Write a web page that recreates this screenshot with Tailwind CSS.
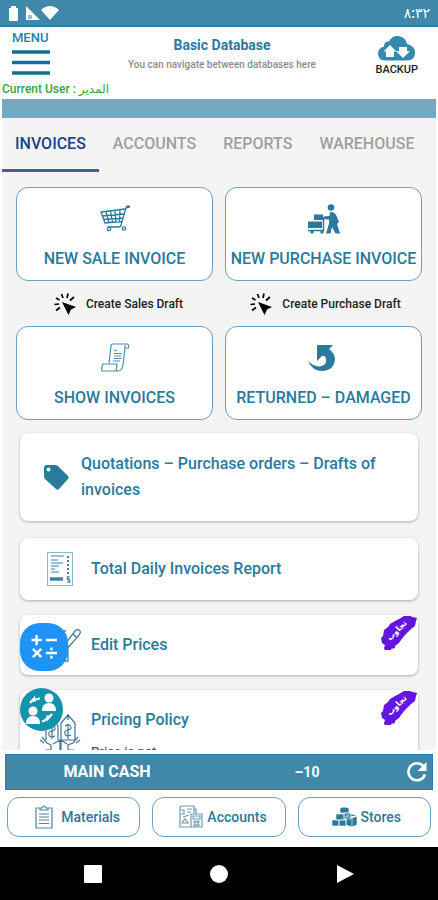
<!DOCTYPE html>
<html lang="en">
<head>
<meta charset="utf-8">
<meta name="viewport" content="width=device-width, initial-scale=1">
<title>Basic Database</title>
<script src="https://cdn.jsdelivr.net/npm/@tailwindcss/browser@4"></script>
</head>
<body class="flex h-screen flex-col overflow-hidden bg-white font-['Roboto','Noto_Sans','DejaVu_Sans',sans-serif] font-medium text-[#2a7a9c]">

<!-- Status bar -->
<div class="flex h-[27px] shrink-0 items-center justify-between border-b-2 border-[#2a7fa2] bg-[#3f88aa] px-2 text-white">
  <svg class="h-4 w-[52px]" viewBox="0 0 52 16" fill="currentColor" aria-hidden="true">
    <path d="M1 4q0-1 1-1h1V1h5v2h1q1 0 1 1v11q0 1-1 1H2q-1 0-1-1z"/>
    <path d="M18 1l14 14H18z"/><path d="M20 10h4v4h-4z" fill="#9dbfd0"/>
    <path d="M33 5q9-8 18 0l-9 10z"/>
  </svg>
  <time class="text-sm">٨:٣٢</time>
</div>

<!-- Header -->
<header class="shrink-0">
  <div class="flex h-14 justify-between pr-5 pl-3">
    <button class="flex w-16 flex-col items-start text-[13px] leading-4 text-[#2a7fa2]" type="button">
      <span class="pt-[3px]">MENU</span>
      <svg class="mt-1 h-[25px] w-[38px]" viewBox="0 0 38 25" aria-hidden="true"><path d="M0 2h38M0 12.500h38M0 23h38" stroke="#126f97" stroke-width="3.500"/></svg>
    </button>
    <div class="pt-2 text-center">
      <h1 class="text-sm leading-5 font-bold">Basic Database</h1>
      <p class="text-[10px] leading-5 text-[#8c8c8c]">You can navigate between databases here</p>
    </div>
    <button class="flex w-[50px] flex-col items-end pt-2 text-[11px] leading-[18px] text-[#222]" type="button">
      <svg class="mr-0.5 h-[26px] w-[39px]" viewBox="0 0 39 26" aria-hidden="true">
        <path d="M8 25.500Q1 25 1 18.500 1 13 7 11.500 7 6 12 6.500 15 .500 21 1q7 .500 9 8 8 1.500 8 9 0 6.500-7 7.500z" fill="#3489ad"/>
        <path d="M13 10l6.500 6.500H17V22H9v-5.500H6.500zM22 12h8v4h3l-7 7-7-7h3z" fill="#fff"/>
      </svg>
      <span>BACKUP</span>
    </button>
  </div>
  <p class="h-4 pl-[2px] text-xs leading-[13px] text-[#35a53a]">Current User : <bdi>المدير</bdi></p>
  <div class="mx-[2px] h-[19px] bg-[#74a9c4]"></div>
</header>

<!-- Scrolling content -->
<main class="mx-[2px] min-h-0 grow overflow-hidden bg-[#f4f4f4]">
  <nav class="flex h-[54px] gap-px text-base text-[#a0a0a0]">
    <a href="#" class="border-b-[3px] border-[#3d6296] px-[13px] pt-[14px] text-[#20408a]">INVOICES</a>
    <a href="#" class="px-[13px] pt-[14px]">ACCOUNTS</a>
    <a href="#" class="px-[13px] pt-[14px]">REPORTS</a>
    <a href="#" class="px-[13px] pt-[14px]">WAREHOUSE</a>
  </nav>

  <div class="grid grid-cols-2 gap-x-3 px-[14px] pt-[15px]">
    <button class="flex h-[94px] flex-col items-center rounded-xl border border-[#6b9fba] bg-white pt-4 whitespace-nowrap" type="button">
      <svg class="h-[30px] w-[30px]" viewBox="0 0 30 30" fill="none" stroke="#2a7a9c" stroke-width="1.300" stroke-linecap="round" aria-hidden="true">
        <path d="M29 3l-3 1-5 17q0 2-3 2H8M1 8l24-3M1 8l4 11 17-1.500M2.500 12l21-2M4 15.500l19-1.500M6 8l3 10.500M10.500 7.500l2 10.500M15 7l1 11M20 6.500l-.500 11"/>
        <circle cx="9" cy="25" r="1.700"/><circle cx="24" cy="24.500" r="1.700"/><path d="M27 3l2-.500" stroke-width="2.500"/>
      </svg>
      <span class="mt-[13px] text-base leading-6">NEW SALE INVOICE</span>
    </button>
    <button class="flex h-[94px] flex-col items-center rounded-xl border border-[#6b9fba] bg-white pt-4 whitespace-nowrap" type="button">
      <svg class="h-[30px] w-[34px]" viewBox="0 0 34 30" fill="#2a7a9c" aria-hidden="true">
        <circle cx="24" cy="3.500" r="3.300"/>
        <path d="M7 10.500h9V16H7zM1 17.500h14V24H1z"/>
        <path d="M23 8q5-.500 7 5l2 5-2 2 3 9.500h-4.500L25 23l-1.500 6.500H19l3-10v-4l-5.500-.500v-2.500l6-.500z"/>
        <path d="M1 26.500h15.500V14H21" fill="none" stroke="#2a7a9c" stroke-width="1.500"/>
        <circle cx="5" cy="28" r="1.700"/><circle cx="15" cy="28" r="1.700"/>
      </svg>
      <span class="mt-[13px] text-base leading-6">NEW PURCHASE INVOICE</span>
    </button>

    <button class="flex h-[45px] items-center justify-center gap-2 pl-2 text-xs text-[#222]" type="button">
      <svg class="h-[22px] w-[24px]" viewBox="0 0 24 22" aria-hidden="true"><path d="M8 9l14 5-5 2.500L14.500 22z" fill="#000"/><path d="M5.500 7L2 5M9 5L7.500 1M13 5l1-4.500M16 7.500L20 4M5 11L.500 11.500M6 14.500L2 17.500" stroke="#000" stroke-width="1.700"/></svg>
      <span>Create Sales Draft</span>
    </button>
    <button class="flex h-[45px] items-center justify-center gap-2 pl-1 text-xs text-[#222]" type="button">
      <svg class="h-[22px] w-[24px]" viewBox="0 0 24 22" aria-hidden="true"><path d="M8 9l14 5-5 2.500L14.500 22z" fill="#000"/><path d="M5.500 7L2 5M9 5L7.500 1M13 5l1-4.500M16 7.500L20 4M5 11L.500 11.500M6 14.500L2 17.500" stroke="#000" stroke-width="1.700"/></svg>
      <span>Create Purchase Draft</span>
    </button>

    <button class="flex h-[94px] flex-col items-center rounded-xl border border-[#6b9fba] bg-white pt-4 whitespace-nowrap" type="button">
      <svg class="h-[30px] w-[28px]" viewBox="0 0 28 30" fill="none" stroke="#4a8dac" stroke-width="1.200" aria-hidden="true">
        <path d="M8 20L10 3q0-2 2-2h14q2 0 1.500 4H24l-2 17q-1 6-5 6H1q-1-2 1-7h14q0 3-1 7M24 5V2M13 7l3 1M13 10.500h8M13 13h7M12.500 15.500h8M12 18h7"/>
      </svg>
      <span class="mt-[13px] text-base leading-6">SHOW INVOICES</span>
    </button>
    <button class="flex h-[94px] flex-col items-center rounded-xl border border-[#6b9fba] bg-white pt-4 whitespace-nowrap" type="button">
      <svg class="h-[30px] w-[34px]" viewBox="0 0 34 30" fill="#2a7a9c" aria-hidden="true">
        <path d="M10 2h16l-4 4q6 4 6 11-1 10-12 11Q5 28 1 18q7 7 14 5 5-2 4-7-1-4-4-3l-5 5z"/>
      </svg>
      <span class="mt-[13px] text-base leading-6">RETURNED – DAMAGED</span>
    </button>
  </div>

  <div class="flex flex-col gap-[15px] px-[18px] pt-[13px] text-base">
    <a href="#" class="mb-[2px] flex h-[88px] items-center gap-3 rounded-lg bg-white pr-9 pl-6 shadow-[0_1px_3px_rgba(0,0,0,0.3)]">
      <svg class="h-[25px] w-[25px] shrink-0" viewBox="0 0 25 25" fill="#2a7a9c" aria-hidden="true"><path fill-rule="evenodd" d="M3 0h8q2 0 3 1l10 10q1.500 1.500 0 3L15 24q-1.500 1.500-3 0L1 14q-1-1-1-3V3q0-3 3-3zM4.500 2.500a2 2 0 1 0 0 4 2 2 0 0 0 0-4z"/></svg>
      <span class="leading-[26px]">Quotations – Purchase orders – Drafts of invoices</span>
    </a>
    <a href="#" class="flex h-[62px] items-center gap-[18px] rounded-lg bg-white pl-[27px] shadow-[0_1px_3px_rgba(0,0,0,0.3)]">
      <svg class="h-[34px] w-[26px]" viewBox="0 0 26 34" fill="none" stroke="#3a82a3" aria-hidden="true">
        <path d="M.500.500h25v33H.500z" stroke="#8fb6c9"/>
        <path d="M4 4h13M4 8h7M4 11h12M4 14h8M4 17h4M4 20h8" stroke-width="1.200"/>
        <path d="M21 4v18" stroke-width="2" stroke-dasharray="2 2"/><path d="M3 27h13" stroke-width="3.500"/><path d="M22.500 25h-2v2l2 1v2h-2" stroke-width="1.500"/>
      </svg>
      <span>Total Daily Invoices Report</span>
    </a>
    <a href="#" class="relative flex h-[60px] items-center gap-[18px] rounded-lg bg-white pl-[27px] shadow-[0_1px_3px_rgba(0,0,0,0.3)]">
      <svg class="-mr-2 h-[36px] w-[34px]" viewBox="0 0 34 36" fill="none" stroke="#4a7f9c" stroke-width="1.300" aria-hidden="true">
        <path d="M2 4h17M2 4v30h19V18M16 20L28 4q3-3 5 0 1 2-1 4L20 22l-5 2zM26 7l4 4M5 12h8M5 18h8"/>
      </svg>
      <span>Edit Prices</span>
      <span class="absolute top-2 left-0 flex h-12 w-12 items-center justify-center rounded-[20px] bg-[#1f93f5]">
        <svg class="h-[26px] w-[28px]" viewBox="0 0 30 28" stroke="#fff" stroke-width="2.600" aria-hidden="true"><path d="M7 1v11M1.500 6.500h11M17 6.500h12M3 16l9 9M12 16l-9 9M17 20.500h12M23 14.500v3M23 23.500v3"/></svg>
      </span>
      <span class="absolute top-px right-px grid h-[34px] w-[36px] place-items-center">
        <svg class="col-start-1 row-start-1 h-full w-full" viewBox="0 0 36 34" fill="#6416e0" aria-hidden="true"><path d="M0 22l2-2 1-6 4-3 2-3 5-3 4-2 5-3 6 0 3 1 4 1-1 3-1 5-4 3-3 3-3 3-4 5-2 3-4 3v2l-4 1v2H4l-1-3 1-3-3-2z"/></svg>
        <span class="col-start-1 row-start-1 -rotate-45 pb-[6px] text-[8px] leading-3 font-bold text-white" lang="ar">تجاوب</span>
      </span>
    </a>
    <a href="#" class="relative flex h-[88px] gap-[14px] rounded-lg bg-white pl-[19px] shadow-[0_1px_3px_rgba(0,0,0,0.3)]">
      <svg class="-mr-1 mt-[22px] h-[44px] w-[42px]" viewBox="0 0 42 44" fill="none" stroke="#3f7593" stroke-width="1.200" aria-hidden="true">
        <path d="M7 28V14l6-8 6 8v14M22 28V11l7-8 7 8v17zM29 2v6M13 12v15M10 15q6-3 6 2-1 2-3 2-4 0-3 4 1 3 6 1M29 12v15M26 14q6-3 6 2-1 2-3 2-4 0-3 4 1 3 6 1"/>
        <path d="M1 28l4 3M3 25l5 6 4 2v5H7l2 4h5v2M14 32l7-4v13h-6M41 28l-4 3M39 25l-5 6-5 2v5h5l-2 4h-5v2M28 32l-6-4v13h6"/>
      </svg>
      <span class="flex flex-col pt-[18px]">
        <span class="leading-6">Pricing Policy</span>
        <span class="mt-[10px] text-[13px] leading-5 text-[#555]">Price is not</span>
      </span>
      <svg class="absolute -top-0.5 left-0 h-[43px] w-[43px]" viewBox="0 0 43 43" aria-hidden="true">
        <circle cx="21.500" cy="21.500" r="21.500" fill="#1592ae"/>
        <g fill="#fff"><circle cx="29" cy="10" r="4.500"/><path d="M22 23q0-8 7-8t7 8z"/><circle cx="13" cy="23" r="4.500"/><path d="M6 36q0-8 7-8t7 8z"/><path d="M10 15l4-4.500v3q1-2.500 6-3M32 26l-4 4.500v-3q-1 5-6 6" fill="none" stroke="#fff" stroke-width="2.200"/></g>
      </svg>
      <span class="absolute top-px right-px grid h-[34px] w-[36px] place-items-center">
        <svg class="col-start-1 row-start-1 h-full w-full" viewBox="0 0 36 34" fill="#6416e0" aria-hidden="true"><path d="M0 22l2-2 1-6 4-3 2-3 5-3 4-2 5-3 6 0 3 1 4 1-1 3-1 5-4 3-3 3-3 3-4 5-2 3-4 3v2l-4 1v2H4l-1-3 1-3-3-2z"/></svg>
        <span class="col-start-1 row-start-1 -rotate-45 pb-[6px] text-[8px] leading-3 font-bold text-white" lang="ar">تجاوب</span>
      </span>
    </a>
  </div>
</main>

<!-- Cash balance and shortcuts -->
<footer class="shrink-0 pt-1">
  <div class="mx-[5px] grid h-9 grid-cols-[202px_1fr_26px] items-center border border-[#2a7fa2] bg-[#3f88aa] text-center text-base font-bold text-white">
    <span>MAIN CASH</span>
    <span class="text-sm">–10</span>
    <button type="button" aria-label="Refresh"><svg class="h-[22px] w-[22px]" viewBox="0 0 22 22" aria-hidden="true"><path d="M18 6A8.500 8.500 0 1 0 19 13.500" fill="none" stroke="#fff" stroke-width="2.600"/><path d="M20.500 1v9h-9z" fill="#fff"/></svg></button>
  </div>
  <div class="grid grid-cols-3 gap-3 px-[7px] pt-[7px] pb-[10px] text-sm">
    <button class="flex h-10 items-center justify-center gap-2 rounded-xl border border-[#6b9fba] pl-2" type="button">
      <svg class="h-6 w-[18px]" viewBox="0 0 18 24" fill="none" stroke="#4a87a5" stroke-width="1.200" aria-hidden="true"><path d="M5 3H1v20h16V3h-4M5 5h8V3h-2Q9-1 7 3H5zM4 9h10M4 12h10M4 15h10M4 18.500h10"/></svg>
      <span>Materials</span>
    </button>
    <button class="flex h-10 items-center justify-center gap-1 rounded-xl border border-[#6b9fba] pl-2" type="button">
      <svg class="h-6 w-6" viewBox="0 0 24 24" fill="none" stroke="#6c9cb4" stroke-width="1.200" aria-hidden="true"><path d="M1 3q0-2 2-2h12v7M1 3v19h11M1 5h4v4H2M15 4h2v5M12 9h11v13H12zM14 11h7v3h-7zM14 17h7M14 20h7M16 15v7M19 15v7M4 12l6-2M3 18l3-4 3 4zM8 4h5M8 7h4"/></svg>
      <span>Accounts</span>
    </button>
    <button class="flex h-10 items-center justify-center gap-1 rounded-xl border border-[#6b9fba] pl-1" type="button">
      <svg class="h-5 w-[25px]" viewBox="0 0 25 20" fill="#2a7a9c" stroke="#fff" stroke-width=".600" aria-hidden="true"><path d="M8 1l4-1 5 1v5H8zM4 7h8v6H4zM12 6h7v6h-7zM0 13h7v6H0zM7 13h7v6H7zM14 9l6-2 5 2v9l-5 2-6-2zM14 9l6 2 5-2M20 11v9"/></svg>
      <span>Stores</span>
    </button>
  </div>
</footer>

<!-- System navigation -->
<nav class="grid h-[53px] shrink-0 grid-cols-3 items-center bg-black px-[30px]">
  <button class="flex justify-center" type="button" aria-label="Recent apps"><span class="h-[18px] w-[18px] rounded-[1px] bg-white"></span></button>
  <button class="flex justify-center" type="button" aria-label="Home"><span class="h-[18px] w-[18px] rounded-full bg-white"></span></button>
  <button class="flex justify-center" type="button" aria-label="Back"><svg class="h-[18px] w-[18px]" viewBox="0 0 18 18" aria-hidden="true"><path d="M1 0l17 9-17 9z" fill="#fff"/></svg></button>
</nav>
</body>
</html>
